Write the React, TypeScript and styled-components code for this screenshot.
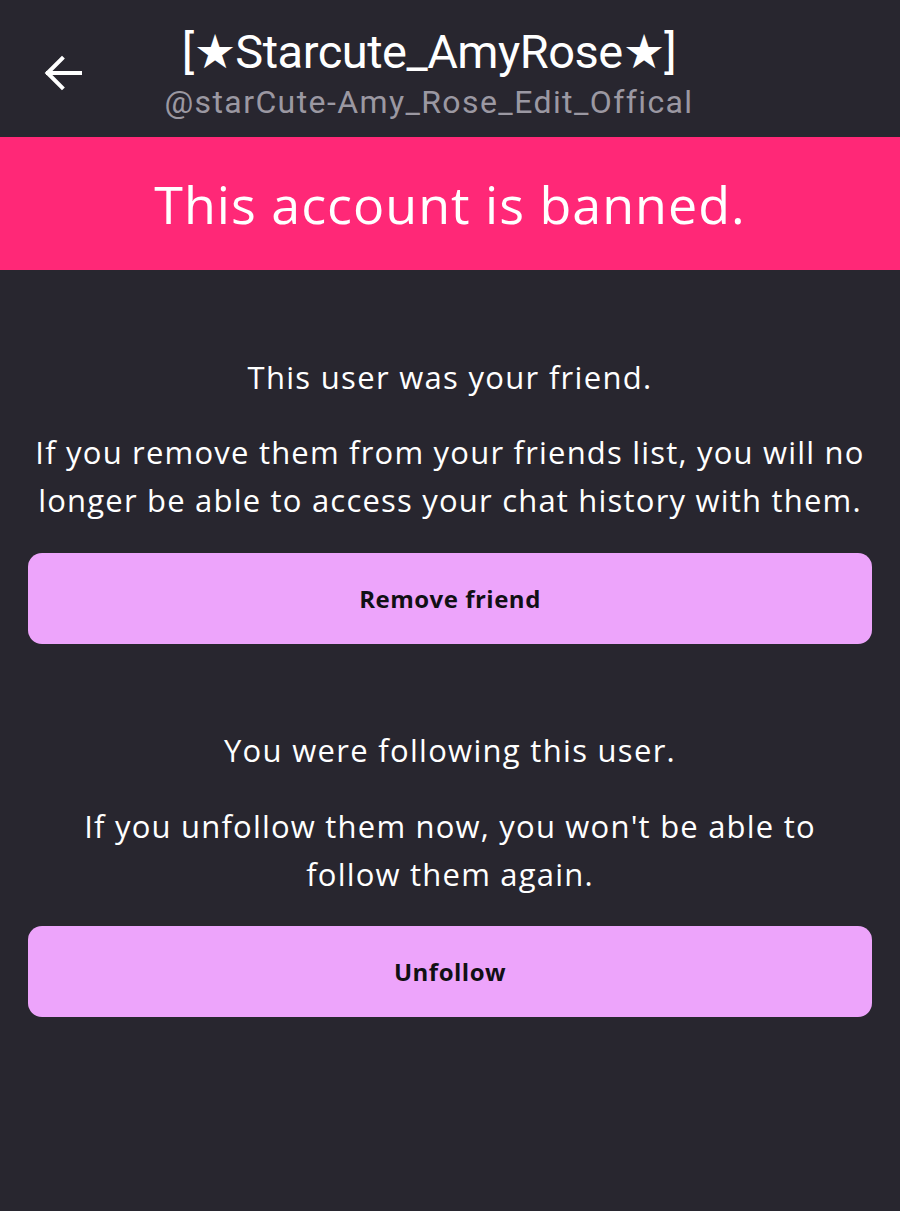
import React from 'react';
import styled, { createGlobalStyle } from 'styled-components';

const GlobalStyle = createGlobalStyle`
  html, body {
    margin: 0;
    padding: 0;
    background: #28262f;
  }
  body {
    font-family: 'Open Sans', 'Noto Sans', sans-serif;
    -webkit-font-smoothing: antialiased;
  }
`;

const Page = styled.div`
  min-height: 1211px;
  background: #28262f;
  color: #ffffff;
  display: flex;
  flex-direction: column;
`;

const Header = styled.header`
  height: 137px;
  display: flex;
  align-items: flex-start;
  padding: 0 0 0 42px;
  box-sizing: border-box;
`;

const BackButton = styled.button`
  background: none;
  border: none;
  padding: 0;
  margin-top: 53px;
  width: 42px;
  height: 40px;
  cursor: pointer;
  display: flex;
  align-items: center;
  justify-content: center;
`;

const Titles = styled.div`
  flex: 1;
  display: flex;
  flex-direction: column;
  align-items: center;
  margin-left: 40px;
  margin-right: 166px;
  padding-top: 22px;
  font-family: 'Roboto', 'Noto Sans', sans-serif;
`;

const Title = styled.h1`
  margin: 0;
  font-weight: 400;
  font-size: 47px;
  line-height: 60px;
  letter-spacing: -0.5px;
  white-space: nowrap;
`;

const Handle = styled.div`
  font-size: 32px;
  line-height: 40px;
  letter-spacing: 1.4px;
  color: #9b98a2;
  white-space: nowrap;
`;

const Banner = styled.div`
  height: 133px;
  background: #ff2877;
  display: flex;
  align-items: center;
  justify-content: center;
  font-size: 52px;
  font-weight: 400;
  letter-spacing: 1px;
`;

const Content = styled.main`
  display: flex;
  flex-direction: column;
  padding: 83px 28px 0;
`;

const Section = styled.section<{ $gap?: number }>`
  display: flex;
  flex-direction: column;
  align-items: center;
  margin-bottom: ${(p) => p.$gap ?? 0}px;
`;

const Lead = styled.p<{ $gap?: number }>`
  margin: 0 0 ${(p) => p.$gap ?? 27}px;
  font-size: 31px;
  line-height: 48px;
  letter-spacing: 1.3px;
  text-align: center;
`;

const Body = styled.p<{ $gap?: number }>`
  margin: 0 0 ${(p) => p.$gap ?? 28}px;
  font-size: 31px;
  line-height: 48px;
  letter-spacing: 1.2px;
  text-align: center;
`;

const ActionButton = styled.button`
  width: 100%;
  height: 91px;
  border: none;
  border-radius: 14px;
  background: #eda4fb;
  color: #111014;
  font-family: 'Open Sans', 'Noto Sans', sans-serif;
  font-weight: 700;
  font-size: 24px;
  letter-spacing: 0.5px;
  cursor: pointer;
`;

const BackArrow = () => (
  <svg width="40" height="40" viewBox="0 0 40 40" fill="none">
    <path
      d="M37 20H5M19 5.5L4.5 20L19 34.5"
      stroke="#ffffff"
      strokeWidth="4"
      strokeLinecap="square"
    />
  </svg>
);

export default function App() {
  return (
    <Page>
      <GlobalStyle />
      <Header>
        <BackButton aria-label="Back">
          <BackArrow />
        </BackButton>
        <Titles>
          <Title>[★Starcute_AmyRose★]</Title>
          <Handle>@starCute-Amy_Rose_Edit_Offical</Handle>
        </Titles>
      </Header>
      <Banner>This account is banned.</Banner>
      <Content>
        <Section $gap={82}>
          <Lead>This user was your friend.</Lead>
          <Body $gap={29}>
            If you remove them from your friends list, you will no
            <br />
            longer be able to access your chat history with them.
          </Body>
          <ActionButton>Remove friend</ActionButton>
        </Section>
        <Section>
          <Lead $gap={28}>You were following this user.</Lead>
          <Body>
            If you unfollow them now, you won't be able to
            <br />
            follow them again.
          </Body>
          <ActionButton>Unfollow</ActionButton>
        </Section>
      </Content>
    </Page>
  );
}
